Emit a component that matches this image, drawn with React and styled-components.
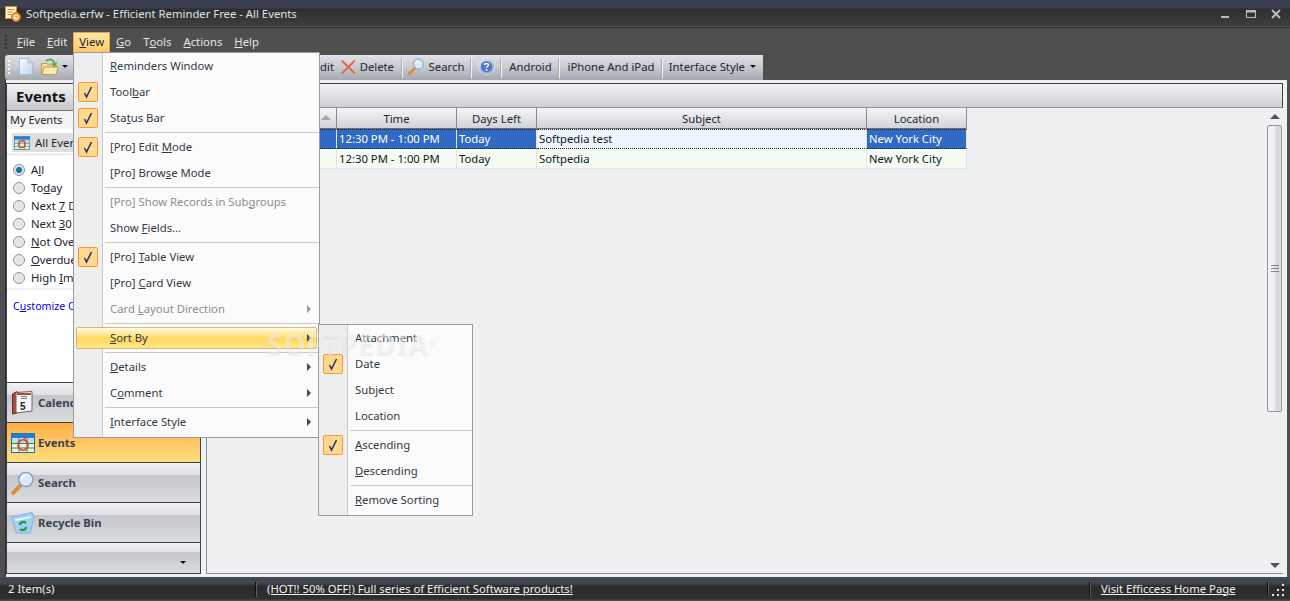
import React from "react";
import styled, { createGlobalStyle } from "styled-components";

const Global = createGlobalStyle`
  html, body { margin: 0; padding: 0; background: #4f4f4f; }
  body { font-family: "Noto Sans", "Liberation Sans", sans-serif; font-size: 11.3px; }
`;

const Window = styled.div`
  position: relative;
  width: 1290px;
  height: 601px;
  overflow: hidden;
  display: flex;
  flex-direction: column;
  background: #4f4f4f;
`;

const TitleBar = styled.div`
  height: 27px;
  flex: none;
  display: flex;
  align-items: center;
  padding: 0 9px 0 5px;
  color: #dfe3e8;
  background: linear-gradient(#3b4150 0, #3b4150 8px, #2d2e2e 9px, #3f3f3f 27px);
  border-bottom: 1px solid #2b2b2b;
  box-shadow: inset 0 -1px 0 #555;
`;
const TitleText = styled.span`
  margin-left: 5px;
  flex: 1;
`;
const WinButtons = styled.div`
  display: flex;
  align-items: center;
  gap: 15px;
`;

const MenuBar = styled.div`
  height: 27px;
  flex: none;
  display: flex;
  align-items: center;
  padding: 2px 0 0 5px;
  box-sizing: border-box;
  background: #4f4f4f;
`;
const TopItem = styled.div`
  height: 21px;
  box-sizing: border-box;
  padding: 0 5px 2px;
  display: flex;
  align-items: center;
  color: ${(p) => (p.$active ? "#22262e" : "#e6e6e6")};
  border: 1px solid ${(p) => (p.$active ? "#e6a548" : "transparent")};
  background: ${(p) => (p.$active ? "linear-gradient(#ffe9a8,#ffc767)" : "none")};
`;
const Grip = styled.div`
  width: 2px;
  height: ${(p) => p.$h}px;
  margin: ${(p) => p.$m};
  background: repeating-linear-gradient(${(p) => p.$c} 0 2px, transparent 2px 4px);
`;

const ToolBar = styled.div`
  width: 758px;
  height: 25px;
  flex: none;
  margin-left: 5px;
  box-sizing: border-box;
  padding: 0 7px 0 3px;
  display: flex;
  align-items: center;
  color: #22262e;
  border-radius: 3px 0 0 3px;
  background: linear-gradient(#dfe1e5, #c9ccd1 45%, #a5a9b1);
`;
const ToolItem = styled.div`
  width: ${(p) => p.$w}px;
  height: 100%;
  flex: none;
  box-sizing: border-box;
  padding-right: ${(p) => p.$pr || 0}px;
  padding-bottom: 2px;
  display: flex;
  align-items: center;
  justify-content: ${(p) => p.$justify || "center"};
  gap: ${(p) => p.$gap || 4}px;
`;
const ToolSep = styled.div`
  width: 1px;
  height: 20px;
  flex: none;
  background: #f5f5f5;
  box-shadow: -1px 0 0 #a6a9b0;
`;
const ToolSpacer = styled.div`
  flex: 1;
`;
const Caret = styled.span`
  width: 0;
  height: 0;
  flex: none;
  border-left: 3px solid transparent;
  border-right: 3px solid transparent;
  border-top: 3px solid #111;
`;

const Body = styled.div`
  width: 1282px;
  height: 497px;
  flex: none;
  margin-left: 5px;
  box-sizing: border-box;
  padding: 3px 4px 3px 1px;
  display: flex;
  gap: 5px;
  background: #f0f1f3;
  box-shadow: inset 1px 0 0 #2c2f35;
`;

const LeftPanel = styled.div`
  width: 195px;
  flex: none;
  box-sizing: border-box;
  display: flex;
  flex-direction: column;
  background: #fff;
  border: 1px solid #3c424e;
`;
const PanelTitle = styled.div`
  height: 24px;
  flex: none;
  padding: 0 0 2px 9px;
  display: flex;
  align-items: center;
  font-size: 15px;
  font-weight: 700;
  color: #111;
  background: linear-gradient(#f4f4f5, #c5c6ca);
  border-bottom: 1px solid #767676;
`;
const MyEvents = styled.div`
  height: 16px;
  flex: none;
  padding: 0 0 2px 3px;
  display: flex;
  align-items: center;
  color: #1c2430;
  font-size: 11px;
  background: #f4f4f4;
`;
const ChipRow = styled.div`
  flex: none;
  padding: 4px 0 1px 5px;
  border-bottom: 3px solid #efefef;
`;
const Chip = styled.div`
  height: 19px;
  display: flex;
  align-items: center;
  gap: 5px;
  padding-left: 2px;
  color: #1c2430;
  background: #dedede;
`;
const RadioList = styled.div`
  flex: none;
  padding: 5px 0 1px 6px;
  display: flex;
  flex-direction: column;
  border-bottom: 2px solid #efefef;
`;
const RadioRow = styled.div`
  height: 18px;
  display: flex;
  align-items: center;
  gap: 6px;
  color: #1c2430;
`;
const RadioLabel = styled.span`
  margin-bottom: 2px;
`;
const Radio = styled.span`
  width: 12px;
  height: 12px;
  flex: none;
  box-sizing: border-box;
  border-radius: 50%;
  border: 1px solid #8d8f93;
  background: ${(p) =>
    p.$on
      ? "radial-gradient(circle,#1d6f9f 0 2.5px,#cfe3ee 3.5px,#e8e8e8 6px)"
      : "radial-gradient(circle,#e4e4e4 0 3px,#f5f5f5 6px)"};
`;
const Customize = styled.div`
  padding: 9px 0 0 6px;
  color: #0000ee;
  font-size: 10.6px;
  flex: 1;
`;
const NavButton = styled.div`
  height: 40px;
  flex: none;
  box-sizing: border-box;
  padding: 0 0 0 2px;
  display: flex;
  align-items: center;
  gap: 2px;
  font-weight: 700;
  font-size: 11.3px;
  color: #394150;
  border-top: 1px solid #3c424e;
  background: ${(p) =>
    p.$active
      ? "linear-gradient(#ffae40,#ffc25e 40%,#ffdf7e)"
      : "linear-gradient(#f3f3f4,#dfe0e3 30%,#c3c5ca 32%,#dcdde0)"};
`;
const NavFoot = styled(NavButton)`
  height: 31px;
  justify-content: flex-end;
  padding: 0 14px 9px 0;
  align-items: flex-end;
`;
const NavIcon = styled.span`
  width: 27px;
  height: 30px;
  flex: none;
  display: flex;
  align-items: center;
  justify-content: center;
`;

const RightPanel = styled.div`
  flex: 1;
  min-width: 0;
  display: flex;
  flex-direction: column;
  background: #eff0f2;
  border-left: 1px solid #8e9094;
  border-bottom: 1px solid #8e9094;
`;
const Strip = styled.div`
  height: 25px;
  flex: none;
  box-sizing: border-box;
  background: linear-gradient(#f3f3f4, #cfd0d4);
  border-top: 1px solid #3c424e;
  border-right: 1px solid #3c424e;
  border-bottom: 1px solid #8e9094;
`;
const TableArea = styled.div`
  flex: 1;
  min-height: 0;
  display: flex;
  margin-left: -1px;
`;
const Table = styled.div`
  flex: 1;
  margin-left: 1px;
`;
const Row = styled.div`
  display: flex;
  height: ${(p) => p.$h}px;
  box-sizing: border-box;
`;
const HeadCell = styled.div`
  position: relative;
  width: ${(p) => p.$w}px;
  flex: none;
  box-sizing: border-box;
  display: flex;
  align-items: center;
  justify-content: center;
  color: #1c2430;
  background: linear-gradient(#f6f6f7, #d2d3d7);
  border-right: 1px solid #8a8c90;
  border-bottom: 1px solid #6c6e72;
`;
const SortMark = styled.span`
  position: absolute;
  right: 5px;
  top: 7px;
  width: 0;
  height: 0;
  border-left: 5px solid transparent;
  border-right: 5px solid transparent;
  border-bottom: 5px solid #a3a5aa;
`;
const Cell = styled.div`
  width: ${(p) => p.$w}px;
  flex: none;
  box-sizing: border-box;
  padding: 0 0 ${(p) => (p.$dot ? 2 : 0)}px 2px;
  display: flex;
  align-items: center;
  white-space: nowrap;
  color: ${(p) => (p.$sel ? "#fff" : "#14181f")};
  background: ${(p) => p.$bg};
  border-right: 1px solid #e3e5e3;
  border-bottom: 1px ${(p) => (p.$dot ? "dotted #222" : "solid #e3e5e3")};
  border-top: ${(p) => (p.$dot ? "1px dotted #222" : "none")};
`;
const ScrollBar = styled.div`
  width: 16px;
  flex: none;
  display: flex;
  flex-direction: column;
  background: #f0f0f0;
`;
const ScrollArrow = styled.div`
  height: ${(p) => p.$h}px;
  flex: none;
  display: flex;
  align-items: center;
  justify-content: center;
`;
const ArrowTip = styled.span`
  width: 0;
  height: 0;
  border-left: 5px solid transparent;
  border-right: 5px solid transparent;
  ${(p) => (p.$up ? "border-bottom" : "border-top")}: 5px solid #49526e;
`;
const Thumb = styled.div`
  height: 287px;
  flex: none;
  box-sizing: border-box;
  margin-right: 1px;
  display: flex;
  align-items: center;
  justify-content: center;
  border: 1px solid #94969a;
  border-radius: 2px;
  background: linear-gradient(90deg, #f2f3f4, #f2f3f4 40%, #d0d2d5 75%, #e4e5e7);
`;
const ThumbLines = styled.span`
  width: 8px;
  height: 8px;
  background: repeating-linear-gradient(#84868a 0 1px, transparent 1px 3px);
`;
const ScrollTrack = styled.div`
  flex: 1;
`;

const StatusBar = styled.div`
  flex: 1;
  display: flex;
  align-items: center;
  color: #f0f0f0;
  background: linear-gradient(#454a54 0, #3e424b 7px, #2b2b2b 9px, #2f2f2f 22px, #4a4a4a 23px);
`;
const StatusCell = styled.div`
  width: ${(p) => p.$w}px;
  flex: none;
  box-sizing: border-box;
  padding: 0 0 2px ${(p) => p.$pad}px;
  height: 15px;
  display: flex;
  align-items: center;
  white-space: nowrap;
  border-right: ${(p) => (p.$sep ? "1px solid #111" : "none")};
  box-shadow: ${(p) => (p.$sep ? "1px 0 0 #5c5c5c" : "none")};
`;
const StatusLink = styled.span`
  text-decoration: underline;
`;
const SizeGrip = styled.span`
  display: flex;
  margin-left: 4px;
  margin-top: 1px;
`;

const Menu = styled.div`
  position: absolute;
  left: ${(p) => p.$x}px;
  top: ${(p) => p.$y}px;
  width: ${(p) => p.$w}px;
  box-sizing: border-box;
  padding: 0 0 2px 0;
  background: linear-gradient(90deg, #eeeeee 0 28px, #c9c9c9 28px 29px, #fbfbfb 29px);
  border: 1px solid #9b9b9b;
`;
const MenuRow = styled.div`
  position: relative;
  height: 26px;
  box-sizing: border-box;
  padding: 0 0 2px 36px;
  display: flex;
  align-items: center;
  color: ${(p) => (p.$dim ? "#8e8e8e" : "#333a46")};
`;
const HotBar = styled.div`
  position: absolute;
  left: 2px;
  right: 2px;
  top: 2px;
  bottom: 2px;
  border: 1px solid #dbb76a;
  border-radius: 2px;
  background: linear-gradient(#fffdf0, #ffeeb0 20%, #ffd95c 55%, #ffe78f);
`;
const RowLabel = styled.span`
  position: relative;
  white-space: nowrap;
`;
const CheckBox = styled.span`
  position: absolute;
  left: 4px;
  top: 3px;
  width: 20px;
  height: 20px;
  box-sizing: border-box;
  display: flex;
  align-items: center;
  justify-content: center;
  border: 1px solid #f39a3f;
  border-radius: 2px;
  background: #ffd88c;
`;
const SubArrow = styled.span`
  position: absolute;
  right: 8px;
  top: 9px;
  width: 0;
  height: 0;
  border-top: 4px solid transparent;
  border-bottom: 4px solid transparent;
  border-left: 4px solid ${(p) => (p.$dim ? "#999" : "#444")};
`;
const MenuSep = styled.div`
  height: 1px;
  margin: 1px 0 1px 31px;
  background: #c9c9c9;
`;
const Watermark = styled.div`
  position: absolute;
  left: 267px;
  top: 325px;
  font-size: 28px;
  font-weight: 700;
  letter-spacing: 1px;
  white-space: nowrap;
  color: rgba(255, 255, 255, 0.42);
  text-shadow: 0 1px 1px rgba(170, 170, 170, 0.25);
  pointer-events: none;
`;
const Reg = styled.sup`
  font-size: 9px;
  font-weight: 400;
  letter-spacing: 0;
`;
const Under = styled.u`
  text-underline-offset: 1px;
`;

const Mn = ({ t }) => {
  const i = t.indexOf("&");
  if (i < 0) return t;
  return (
    <>
      {t.slice(0, i)}
      <Under>{t[i + 1]}</Under>
      {t.slice(i + 2)}
    </>
  );
};

const Check = () => (
  <svg width="12" height="14" viewBox="0 0 12 14">
    <path d="M2.5 8 L4.5 12 L9.5 2" fill="none" stroke="#20306e" strokeWidth="1.5" />
  </svg>
);

const MinIcon = () => (
  <svg width="10" height="10" viewBox="0 0 10 10"><rect x="0" y="7" width="8" height="2" fill="#b6bcc4" /></svg>
);
const MaxIcon = () => (
  <svg width="10" height="10" viewBox="0 0 10 10"><rect x="0.5" y="1.5" width="9" height="7" fill="none" stroke="#b6bcc4" /><rect x="0" y="1" width="10" height="2.5" fill="#b6bcc4" /></svg>
);
const CloseIcon = () => (
  <svg width="10" height="10" viewBox="0 0 10 10"><path d="M1 1 L9 9 M9 1 L1 9" stroke="#b6bcc4" strokeWidth="2" /></svg>
);
const AppIcon = () => (
  <svg width="16" height="16" viewBox="0 0 16 16">
    <rect x="0.5" y="0.5" width="11" height="12" fill="#fdf4df" stroke="#e88a22" />
    <path d="M2.5 3.5h7M2.5 6h5M2.5 8.5h4" stroke="#e88a22" />
    <circle cx="11" cy="11" r="4.5" fill="#f59a2a" stroke="#d86f12" />
    <circle cx="11" cy="11" r="2.6" fill="#fff3df" />
    <path d="M11 9.5V11h1.4" stroke="#c85f10" fill="none" />
  </svg>
);
const NewIcon = () => (
  <svg width="14" height="17" viewBox="0 0 14 17">
    <defs><linearGradient id="nd" x1="0" y1="0" x2="1" y2="1"><stop offset="0" stopColor="#ffffff" /><stop offset="1" stopColor="#b9d2f2" /></linearGradient></defs>
    <path d="M0.5 0.5H9L13.5 5V16.5H0.5Z" fill="url(#nd)" stroke="#a9bedb" />
    <path d="M9 0.5V5H13.5Z" fill="#cfe0f5" stroke="#a9bedb" />
  </svg>
);
const OpenIcon = () => (
  <svg width="18" height="17" viewBox="0 0 18 17">
    <path d="M0.5 5.5H6l1.5 1.5H15v9H0.5Z" fill="#f4dc94" stroke="#c49a45" />
    <path d="M1 16.5L3 9h14l-2 7.5Z" fill="#fbeab4" stroke="#c49a45" />
    <path d="M5 3C8 0.5 12 1 13.5 5" fill="none" stroke="#4fb548" strokeWidth="2" />
    <path d="M10.5 5.5L16.5 4.2L13.5 10Z" fill="#4fb548" />
  </svg>
);
const DeleteIcon = () => (
  <svg width="16" height="16" viewBox="0 0 16 16"><path d="M1 1 L15 15 M15 1 L1 15" stroke="#ea5a3c" strokeWidth="2" /></svg>
);
const SearchIcon = ({ s = 17 }) => (
  <svg width={s} height={s} viewBox="0 0 17 17">
    <path d="M1.5 15.5L7 10" stroke="#e08a32" strokeWidth="2.6" strokeLinecap="round" />
    <circle cx="10.5" cy="6" r="5" fill="#d7ebfb" stroke="#8d9cc4" />
    <path d="M7.5 6C7.5 4.5 9 3.2 10.5 3.2" stroke="#fff" fill="none" strokeWidth="1.2" />
  </svg>
);
const HelpIcon = () => (
  <svg width="17" height="17" viewBox="0 0 17 17">
    <defs><radialGradient id="hp" cx="0.4" cy="0.3" r="0.8"><stop offset="0" stopColor="#eaf1fc" /><stop offset="1" stopColor="#6f93d8" /></radialGradient></defs>
    <circle cx="8.5" cy="8.5" r="8" fill="url(#hp)" stroke="#dfe7f6" />
    <circle cx="8.5" cy="8.5" r="5.6" fill="#4f78c8" />
    <path d="M6.5 7C6.5 5 10.5 5 10.5 7C10.5 8.4 8.5 8.2 8.5 10" fill="none" stroke="#fff" strokeWidth="1.4" />
    <rect x="7.7" y="11" width="1.6" height="1.6" fill="#fff" />
  </svg>
);
const GridIcon = ({ w = 16, h = 14 }) => (
  <svg width={w} height={h} viewBox="0 0 24 20">
    <rect x="0.5" y="0.5" width="23" height="19" fill="#e9f3e6" stroke="#1f6db5" />
    <rect x="0.5" y="0.5" width="23" height="4.5" fill="#1f7fd0" />
    <rect x="1" y="5.5" width="22" height="4.5" fill="#bcdcf4" />
    <path d="M1 10.5h22M1 15h22M8 5v14M16 5v14" stroke="#3b8f3b" strokeWidth="1" />
    <ellipse cx="12" cy="12" rx="5" ry="5.2" fill="none" stroke="#e53a22" strokeWidth="1.6" />
    <path d="M13 6.8L15.5 3" stroke="#e53a22" strokeWidth="1.2" />
  </svg>
);
const CalendarIcon = () => (
  <svg width="21" height="25" viewBox="0 0 21 25">
    <path d="M0.5 4L5 1.5V23L0.5 24Z" fill="#b5483c" stroke="#6e2a22" />
    <path d="M4 2.5L20 1.5V21L4 23Z" fill="#f8f8f6" stroke="#666" />
    <path d="M5 4h14" stroke="#b5483c" strokeWidth="2" />
    <path d="M9 6.5h6M9 8.5h6" stroke="#777" />
    <text x="8" y="20" fontSize="10" fontFamily="Liberation Sans" fontWeight="700" fill="#222">5</text>
  </svg>
);
const BinIcon = () => (
  <svg width="24" height="24" viewBox="0 0 24 24">
    <path d="M1 6L21 1.5L23 6L19 22H5Z" fill="#9fd0f2" stroke="#7fb5e0" />
    <path d="M4 9L20 6" stroke="#e6f4fc" strokeWidth="2" />
    <path d="M9 14C9 11 13 10 15 12M15 16C15 19 11 20 9 18" fill="none" stroke="#1e9a36" strokeWidth="2.2" />
  </svg>
);
const GripDots = () => (
  <svg width="14" height="12" viewBox="0 0 14 12" fill="#e8e8e8">
    <rect x="10" y="0" width="2" height="2" />
    <rect x="5" y="5" width="2" height="2" />
    <rect x="10" y="5" width="2" height="2" />
    <rect x="0" y="10" width="2" height="2" />
    <rect x="5" y="10" width="2" height="2" />
    <rect x="10" y="10" width="2" height="2" />
  </svg>
);

const mainMenu = [
  { t: "&Reminders Window" },
  { t: "Tool&bar", c: 1 },
  { t: "Sta&tus Bar", c: 1 },
  "-",
  { t: "[Pro] Edit &Mode", c: 1 },
  { t: "[Pro] Brow&se Mode" },
  "-",
  { t: "[Pro] Show Records in Sub&groups", d: 1 },
  { t: "Show &Fields..." },
  "-",
  { t: "[Pro] &Table View", c: 1 },
  { t: "[Pro] &Card View" },
  { t: "Card &Layout Direction", d: 1, s: 1 },
  "-",
  { t: "&Sort By", s: 1, hot: 1 },
  "-",
  { t: "&Details", s: 1 },
  { t: "C&omment", s: 1 },
  "-",
  { t: "&Interface Style", s: 1 },
];
const subMenu = [
  { t: "Attachment" },
  { t: "Date", c: 1 },
  { t: "Subject" },
  { t: "Location" },
  "-",
  { t: "&Ascending", c: 1 },
  { t: "&Descending" },
  "-",
  { t: "&Remove Sorting" },
];

const MenuList = ({ items, x, y, w }) => (
  <Menu $x={x} $y={y} $w={w}>
    {items.map((it, i) =>
      it === "-" ? (
        <MenuSep key={i} />
      ) : (
        <MenuRow key={i} $dim={it.d}>
          {it.hot && <HotBar />}
          {it.c && (
            <CheckBox>
              <Check />
            </CheckBox>
          )}
          <RowLabel>
            <Mn t={it.t} />
          </RowLabel>
          {it.s && <SubArrow $dim={it.d} />}
        </MenuRow>
      )
    )}
  </Menu>
);

const topMenus = [
  ["&File"],
  ["&Edit"],
  ["&View", true],
  ["&Go"],
  ["T&ools"],
  ["&Actions"],
  ["&Help"],
];
const radios = ["A&ll", "To&day", "Next &7 Days", "Next &30 Days", "&Not Overdue", "&Overdue", "High &Importance"];
const cols = [130, 120, 80, 330, 100];
const rows = [
  { cells: ["", "12:30 PM - 1:00 PM", "Today", "Softpedia test", "New York City"], sel: true },
  { cells: ["", "12:30 PM - 1:00 PM", "Today", "Softpedia", "New York City"] },
];

export default function App() {
  return (
    <Window>
      <Global />
      <TitleBar>
        <AppIcon />
        <TitleText>Softpedia.erfw - Efficient Reminder Free - All Events</TitleText>
        <WinButtons>
          <MinIcon />
          <MaxIcon />
          <CloseIcon />
        </WinButtons>
      </TitleBar>
      <MenuBar>
        <Grip $h={16} $c="#2f2f2f" $m="0 4px 0 0" />
        {topMenus.map(([t, a]) => (
          <TopItem key={t} $active={a}>
            <Mn t={t} />
          </TopItem>
        ))}
      </MenuBar>
      <ToolBar>
        <Grip $h={16} $c="#ffffff" $m="0 8px 0 0" />
        <ToolItem $w={16}><NewIcon /></ToolItem>
        <ToolItem $w={41} $gap={3}><OpenIcon /><Caret /></ToolItem>
        <ToolSpacer />
        <ToolItem $w={27} $pr={7} $justify="flex-end">Edit</ToolItem>
        <ToolItem $w={61} $pr={8}><DeleteIcon />Delete</ToolItem>
        <ToolSep />
        <ToolItem $w={68} $pr={2}><SearchIcon />Search</ToolItem>
        <ToolSep />
        <ToolItem $w={29}><HelpIcon /></ToolItem>
        <ToolSep />
        <ToolItem $w={57}>Android</ToolItem>
        <ToolSep />
        <ToolItem $w={102}>iPhone And iPad</ToolItem>
        <ToolSep />
        <ToolItem $w={93} $gap={5} $justify="flex-end">Interface Style<Caret /></ToolItem>
      </ToolBar>
      <Body>
        <LeftPanel>
          <PanelTitle>Events</PanelTitle>
          <MyEvents>My Events</MyEvents>
          <ChipRow>
            <Chip><GridIcon />All Events</Chip>
          </ChipRow>
          <RadioList>
            {radios.map((r, i) => (
              <RadioRow key={r}>
                <Radio $on={i === 0} />
                <RadioLabel><Mn t={r} /></RadioLabel>
              </RadioRow>
            ))}
          </RadioList>
          <Customize>C<Under>u</Under>stomize Conditions</Customize>
          <NavButton><NavIcon><CalendarIcon /></NavIcon>Calendar</NavButton>
          <NavButton $active><NavIcon><GridIcon w={24} h={20} /></NavIcon>Events</NavButton>
          <NavButton><NavIcon><SearchIcon s={24} /></NavIcon>Search</NavButton>
          <NavButton><NavIcon><BinIcon /></NavIcon>Recycle Bin</NavButton>
          <NavFoot><Caret /></NavFoot>
        </LeftPanel>
        <RightPanel>
          <Strip />
          <TableArea>
            <Table>
              <Row $h={21}>
                <HeadCell $w={cols[0]}><SortMark /></HeadCell>
                <HeadCell $w={cols[1]}>Time</HeadCell>
                <HeadCell $w={cols[2]}>Days Left</HeadCell>
                <HeadCell $w={cols[3]}>Subject</HeadCell>
                <HeadCell $w={cols[4]}>Location</HeadCell>
              </Row>
              {rows.map((r, i) => (
                <Row $h={20} key={i}>
                  {r.cells.map((c, j) => {
                    const sel = r.sel && j !== 3;
                    const bg = r.sel ? (j === 3 ? "#eef5ff" : "#316ac5") : "#f3fbf3";
                    return (
                      <Cell key={j} $w={cols[j]} $sel={sel} $bg={bg} $dot={r.sel}>
                        {c}
                      </Cell>
                    );
                  })}
                </Row>
              ))}
            </Table>
            <ScrollBar>
              <ScrollArrow $h={17}><ArrowTip $up /></ScrollArrow>
              <Thumb><ThumbLines /></Thumb>
              <ScrollTrack />
              <ScrollArrow $h={15}><ArrowTip /></ScrollArrow>
            </ScrollBar>
          </TableArea>
        </RightPanel>
      </Body>
      <StatusBar>
        <StatusCell $w={256} $pad={8} $sep>2 Item(s)</StatusCell>
        <StatusCell $w={834} $pad={11} $sep><StatusLink>(HOT!! 50% OFF!) Full series of Efficient Software products!</StatusLink></StatusCell>
        <StatusCell $w={178} $pad={11} $sep><StatusLink>Visit Efficcess Home Page</StatusLink></StatusCell>
        <SizeGrip><GripDots /></SizeGrip>
      </StatusBar>
      <MenuList items={mainMenu} x={73} y={52} w={247} />
      <MenuList items={subMenu} x={318} y={324} w={155} />
      <Watermark>SOFTPEDIA<Reg>®</Reg></Watermark>
    </Window>
  );
}
